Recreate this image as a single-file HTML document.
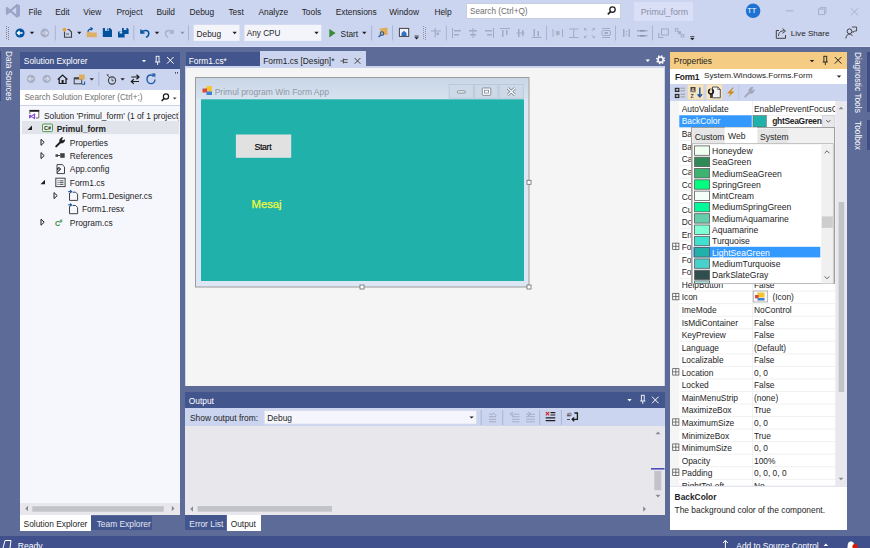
<!DOCTYPE html>
<html><head><meta charset="utf-8">
<style>
*{margin:0;padding:0;box-sizing:border-box}
html,body{width:870px;height:548px;overflow:hidden}
body{position:relative;background:#5D6B99;font-family:"Liberation Sans",sans-serif;font-size:8.4px;color:#1E1E1E}
.a{position:absolute}
.t{position:absolute;white-space:nowrap;line-height:10px;z-index:2}
svg{position:absolute;overflow:visible}
</style></head><body>

<!-- TOP BAR -->
<div class="a" style="left:0;top:0;width:870px;height:47px;background:#CCD5F0"></div>
<div class="a" style="left:0;top:46px;width:870px;height:1px;background:#D9DFF5"></div>

<!-- MENU -->
<svg style="left:0;top:0" width="26" height="22"><g fill="none" stroke="#9AA2C5" stroke-width="2.1" stroke-linejoin="round"><path d="M17.2 5 L6.9 13.6 L6.9 8 L17.2 16.6"/></g><path d="M16.2 3.8 L19.9 5.3 L19.9 16.2 L16.2 17.7 Z" fill="#9AA2C5"/></svg>
<div class="t" style="left:28.4px;top:6.7px">File</div>
<div class="t" style="left:55.2px;top:6.7px">Edit</div>
<div class="t" style="left:83.3px;top:6.7px">View</div>
<div class="t" style="left:116.4px;top:6.7px">Project</div>
<div class="t" style="left:156.4px;top:6.7px">Build</div>
<div class="t" style="left:189.5px;top:6.7px">Debug</div>
<div class="t" style="left:228.4px;top:6.7px">Test</div>
<div class="t" style="left:258.4px;top:6.7px">Analyze</div>
<div class="t" style="left:301.7px;top:6.7px">Tools</div>
<div class="t" style="left:335.7px;top:6.7px">Extensions</div>
<div class="t" style="left:389.2px;top:6.7px">Window</div>
<div class="t" style="left:434.4px;top:6.7px">Help</div>

<!-- TOOLBAR -->
<svg style="left:0;top:0" width="870" height="47"><rect x="6" y="26" width="1" height="1" fill="#7A7F96"/><rect x="8" y="27" width="1" height="1" fill="#7A7F96"/><rect x="6" y="28" width="1" height="1" fill="#7A7F96"/><rect x="8" y="29" width="1" height="1" fill="#7A7F96"/><rect x="6" y="30" width="1" height="1" fill="#7A7F96"/><rect x="8" y="31" width="1" height="1" fill="#7A7F96"/><rect x="6" y="32" width="1" height="1" fill="#7A7F96"/><rect x="8" y="33" width="1" height="1" fill="#7A7F96"/><rect x="6" y="34" width="1" height="1" fill="#7A7F96"/><rect x="8" y="35" width="1" height="1" fill="#7A7F96"/><rect x="6" y="36" width="1" height="1" fill="#7A7F96"/><rect x="8" y="37" width="1" height="1" fill="#7A7F96"/><rect x="6" y="38" width="1" height="1" fill="#7A7F96"/><rect x="8" y="39" width="1" height="1" fill="#7A7F96"/><circle cx="20" cy="33" r="4.6" fill="#00539C"/><path d="M22.6 33 L17.6 33 M19.6 31 L17.4 33 L19.6 35" stroke="#fff" stroke-width="1.3" fill="none"/><path d="M29.8 31.8 L34.2 31.8 L32 34.2 Z" fill="#1E1E1E"/><circle cx="44.8" cy="33" r="4.4" fill="#A9AFC4"/><path d="M42.2 33 L47.2 33 M45.2 31 L47.4 33 L45.2 35" stroke="#D6DBEC" stroke-width="1.2" fill="none"/><rect x="54.8" y="25.5" width="1" height="15" fill="#A9B3D4"/><path d="M64.5 31.5 L64.5 37.3 L71.5 37.3 L71.5 32 L69 29.5 L67.5 29.5" fill="none" stroke="#424242" stroke-width="1.1"/><circle cx="64.5" cy="29.6" r="1.9" fill="#E8A33D"/><path d="M66 34 L69 34" stroke="#424242" stroke-width="0.8"/><path d="M77.1 31.8 L81.5 31.8 L79.3 34.2 Z" fill="#1E1E1E"/><path d="M86.7 31.5 L90 31.5 L91 32.5 L96.8 32.5 L96.8 37.2 L86.7 37.2 Z" fill="#DCB067"/><path d="M88 31.8 C88 29.5 89.5 28.8 92 28.8 M90.6 27.4 L92.3 28.8 L90.6 30.3" fill="none" stroke="#00539C" stroke-width="1.2"/><path d="M102.8 28 L110 28 L112 30 L112 36.9 L102.8 36.9 Z" fill="#00539C"/><rect x="105" y="28" width="4" height="2.8" fill="#CCD5F0"/><rect x="107.2" y="28.4" width="1.2" height="2" fill="#00539C"/><path d="M122 28 L127.5 28 L128.6 29.2 L128.6 34 L122 34 Z" fill="#00539C"/><rect x="123.8" y="28" width="2.6" height="2" fill="#CCD5F0"/><path d="M118 31.5 L123.6 31.5 L124.6 32.5 L124.6 37.6 L118 37.6 Z" fill="#00539C"/><rect x="119.6" y="31.5" width="2.6" height="2" fill="#CCD5F0"/><rect x="133.3" y="25.5" width="1" height="15" fill="#A9B3D4"/><path d="M141 29.5 L141 33 L144.5 33 M141.3 32.6 C143 29.8 148.8 29.5 148.8 33.5 C148.8 35.5 147.5 36.8 146 37.4" fill="none" stroke="#00539C" stroke-width="1.5"/><path d="M154.8 31.8 L159.2 31.8 L157 34.2 Z" fill="#1E1E1E"/><path d="M173 29.5 L173 33 L169.5 33 M172.7 32.6 C171 29.8 165.5 29.5 165.5 33.5 C165.5 35.5 166.8 36.8 168 37.4" fill="none" stroke="#A9AFC4" stroke-width="1.4"/><path d="M180.20000000000002 31.8 L184.6 31.8 L182.4 34.2 Z" fill="#8E94AA"/><rect x="188.0" y="25.5" width="1" height="15" fill="#A9B3D4"/><rect x="193.7" y="24.8" width="45.8" height="16.1" fill="#F4F5FB"/><path d="M232.5 31.8 L236.89999999999998 31.8 L234.7 34.2 Z" fill="#1E1E1E"/><rect x="244.4" y="24.8" width="76.9" height="16.1" fill="#F4F5FB"/><path d="M314.3 31.8 L318.7 31.8 L316.5 34.2 Z" fill="#1E1E1E"/><path d="M329.3 28.9 L335.6 33.1 L329.3 37.4 Z" fill="#388A34"/><path d="M362.1 31.8 L366.5 31.8 L364.3 34.2 Z" fill="#1E1E1E"/><rect x="371.1" y="25.5" width="1" height="15" fill="#A9B3D4"/><path d="M379.5 28.5 L387.5 27.5 L387.5 35 L381 35 Z" fill="#E0AE5A"/><circle cx="382" cy="33.6" r="1.8" fill="none" stroke="#1F5BA6" stroke-width="1.1"/><path d="M380.6 35 L378.6 37" stroke="#1F5BA6" stroke-width="1.3"/><rect x="392.1" y="25.5" width="1" height="15" fill="#A9B3D4"/><rect x="399.4" y="28.4" width="9.3" height="8" fill="#F4F5FB" stroke="#424242" stroke-width="1"/><path d="M401.5 36 L401.5 33 L404 30.8 L406.6 33 L406.6 36 Z" fill="#2D72C4"/><rect x="414.6" y="35.6" width="4" height="0.9" fill="#1E1E1E"/><path d="M414.4 37.3 L418.8 37.3 L416.6 39.6 Z" fill="#1E1E1E"/><rect x="423" y="26" width="1" height="1" fill="#8C92AA"/><rect x="425" y="27" width="1" height="1" fill="#8C92AA"/><rect x="423" y="28" width="1" height="1" fill="#8C92AA"/><rect x="425" y="29" width="1" height="1" fill="#8C92AA"/><rect x="423" y="30" width="1" height="1" fill="#8C92AA"/><rect x="425" y="31" width="1" height="1" fill="#8C92AA"/><rect x="423" y="32" width="1" height="1" fill="#8C92AA"/><rect x="425" y="33" width="1" height="1" fill="#8C92AA"/><rect x="423" y="34" width="1" height="1" fill="#8C92AA"/><rect x="425" y="35" width="1" height="1" fill="#8C92AA"/><rect x="423" y="36" width="1" height="1" fill="#8C92AA"/><rect x="425" y="37" width="1" height="1" fill="#8C92AA"/><rect x="423" y="38" width="1" height="1" fill="#8C92AA"/><rect x="425" y="39" width="1" height="1" fill="#8C92AA"/><path d="M431 31 L440.8 31 M435.2 28 L435.2 37.6" stroke="#A3AAC2" stroke-width="1.1"/><rect x="436.5" y="32.5" width="2.5" height="2.5" fill="#A3AAC2"/><rect x="445.8" y="25.5" width="1" height="15" fill="#A9B3D4"/><path d="M452.5 28 L452.5 38" stroke="#A3AAC2" stroke-width="1"/><rect x="454" y="30" width="7" height="1.5" fill="#A3AAC2"/><rect x="454" y="34" width="5" height="1.5" fill="#A3AAC2"/><path d="M473 28 L473 38" stroke="#A3AAC2" stroke-width="1"/><rect x="469" y="30" width="8" height="1.5" fill="#A3AAC2"/><rect x="470" y="34" width="6" height="1.5" fill="#A3AAC2"/><path d="M493.5 28 L493.5 38" stroke="#A3AAC2" stroke-width="1"/><rect x="485" y="30" width="7" height="1.5" fill="#A3AAC2"/><rect x="487" y="34" width="5" height="1.5" fill="#A3AAC2"/><path d="M500 28.5 L510 28.5" stroke="#A3AAC2" stroke-width="1"/><rect x="502" y="30" width="1.5" height="7" fill="#A3AAC2"/><rect x="506" y="30" width="1.5" height="5" fill="#A3AAC2"/><path d="M516.4 33 L524.5 33" stroke="#A3AAC2" stroke-width="1"/><rect x="518" y="29" width="1.5" height="8" fill="#A3AAC2"/><rect x="522" y="30" width="1.5" height="6" fill="#A3AAC2"/><path d="M531.7 37.5 L541.4 37.5" stroke="#A3AAC2" stroke-width="1"/><rect x="533.5" y="29" width="1.5" height="7.5" fill="#A3AAC2"/><rect x="537.5" y="31" width="1.5" height="5.5" fill="#A3AAC2"/><rect x="546.0" y="25.5" width="1" height="15" fill="#A9B3D4"/><path d="M553 29 L553 37 M562.5 29 L562.5 37 M555.5 33 L560 33 M557.7 30.5 L557.7 35.5 M555.8 31 L559.6 35 M559.6 31 L555.8 35" stroke="#A3AAC2" stroke-width="1"/><path d="M569 29 L578.5 29 M569 37.5 L578.5 37.5 M573.7 29 L573.7 37.5" stroke="#A3AAC2" stroke-width="1.1"/><path d="M584.5 28.5 L587 31 M584.5 28.5 L584.5 30.3 M584.5 28.5 L586.3 28.5 M594.3 28.5 L591.8 31 M594.3 28.5 L594.3 30.3 M594.3 28.5 L592.5 28.5 M584.5 37.6 L587 35.1 M584.5 37.6 L584.5 35.8 M584.5 37.6 L586.3 37.6 M594.3 37.6 L591.8 35.1 M594.3 37.6 L594.3 35.8 M594.3 37.6 L592.5 37.6" stroke="#A3AAC2" stroke-width="0.9" fill="none"/><path d="M602 28.5 L610 28.5 M602 37.5 L610 37.5" stroke="#A3AAC2" stroke-width="1"/><rect x="602" y="30.5" width="8.5" height="5" rx="1.5" fill="none" stroke="#A3AAC2" stroke-width="1"/><rect x="604.5" y="32" width="3.5" height="2" fill="#A3AAC2"/><rect x="615.0" y="25.5" width="1" height="15" fill="#A9B3D4"/><rect x="623" y="29" width="1.5" height="8" fill="#A3AAC2"/><rect x="628.5" y="29" width="1.5" height="8" fill="#A3AAC2"/><rect x="625.8" y="31" width="1.4" height="1.4" fill="#A3AAC2"/><rect x="625.8" y="34" width="1.4" height="1.4" fill="#A3AAC2"/><rect x="637" y="30" width="10.5" height="1.5" fill="#A3AAC2"/><rect x="637" y="35" width="10.5" height="1.5" fill="#A3AAC2"/><rect x="640" y="30" width="4.5" height="1.5" fill="#8990A8"/><rect x="640" y="35" width="4.5" height="1.5" fill="#8990A8"/><rect x="652.0" y="25.5" width="1" height="15" fill="#A9B3D4"/><path d="M658.8 33 L658.8 37.5 L663.5 37.5 M661.5 30 L661.5 35 L668.3 35 L668.3 29 L661.5 29 Z" fill="none" stroke="#A3AAC2" stroke-width="1.1"/><rect x="675.3" y="28.6" width="2.6" height="2.6" fill="none" stroke="#A3AAC2" stroke-width="0.9"/><rect x="678" y="31.2" width="3" height="3" fill="#A3AAC2"/><rect x="681.2" y="34.4" width="2.6" height="2.6" fill="none" stroke="#A3AAC2" stroke-width="0.9"/><rect x="690.3" y="36.3" width="4" height="0.9" fill="#1E1E1E"/><path d="M690.1 38 L694.5 38 L692.3 40.3 Z" fill="#1E1E1E"/></svg>
<div class="t" style="left:196.6px;top:28.9px;font-size:8.3px">Debug</div>
<div class="t" style="left:246.8px;top:28.9px;font-size:8.2px">Any CPU</div>
<div class="t" style="left:340.6px;top:28.9px;font-size:8.3px">Start</div>

<!-- TOP RIGHT -->
<div class="a" style="left:466px;top:3.3px;width:155.4px;height:15.5px;background:#FFFFFF;border:1px solid #C8CEE0"></div>
<div class="t" style="left:470px;top:6.7px;color:#6D6D6D;font-size:8.2px">Search (Ctrl+Q)</div>
<svg style="left:0;top:0" width="870" height="47"><circle cx="612.5" cy="9.6" r="2.7" fill="none" stroke="#1E1E1E" stroke-width="1.3"/><path d="M610.6 11.6 L607.8 14.4" stroke="#1E1E1E" stroke-width="1.6"/><circle cx="753.1" cy="10.8" r="7.3" fill="#1E73D2"/><path d="M786 10.8 L793.5 10.8" stroke="#A9B0C8" stroke-width="1"/><rect x="818.5" y="9" width="6" height="5.6" fill="none" stroke="#A9B0C8" stroke-width="1"/><path d="M820.3 9 L820.3 7.6 L826 7.6 L826 12.8 L824.5 12.8" fill="none" stroke="#A9B0C8" stroke-width="1"/><path d="M851 8.3 L858 15.3 M858 8.3 L851 15.3" stroke="#A9B0C8" stroke-width="1"/><path d="M779 30.5 L776.3 30.5 L776.3 38.3 L785.5 38.3 L785.5 35" fill="none" stroke="#424242" stroke-width="1"/><path d="M778.5 36 C778.5 32 781 30.8 784 30.8 M782.5 28.5 L785.5 31 L782.5 33.4" fill="none" stroke="#424242" stroke-width="1"/><circle cx="849.5" cy="31.3" r="2.4" fill="none" stroke="#424242" stroke-width="1"/><path d="M845.8 38.5 C846.3 35.3 847.5 34.2 849.5 34.2 C851 34.2 852 35 852.6 36" fill="none" stroke="#424242" stroke-width="1"/><path d="M851.8 27 L856.6 27 L856.6 31 L854.5 31 L853 32.5 L853 31" fill="none" stroke="#424242" stroke-width="0.9"/></svg>
<div class="a" style="left:634.3px;top:2.2px;width:58.7px;height:18.5px;background:#D9DFF6"></div>
<div class="t" style="left:640.7px;top:7px;color:#8A8FA6;font-size:8.8px">Primul_form</div>
<div class="t" style="left:747.2px;top:6px;color:#FFFFFF;font-size:7.5px">TT</div>
<div class="t" style="left:790.8px;top:29px;font-size:8.1px">Live Share</div>

<!-- LEFT STRIP (Data Sources) -->
<div class="a" style="left:0;top:51px;width:1.2px;height:50px;background:#3F4F85"></div>

<!-- SOLUTION EXPLORER -->
<div class="a" style="left:20px;top:52px;width:160px;height:17px;background:#42558C"></div>
<div class="a" style="left:20px;top:69px;width:160px;height:21px;background:#CCD5F0"></div>
<div class="a" style="left:20px;top:90px;width:160px;height:16px;background:#FFFFFF"></div>
<div class="a" style="left:20px;top:106px;width:160px;height:397px;background:#F6F7FC"></div>
<div class="a" style="left:20px;top:105px;width:160px;height:1px;background:#CDD3E6"></div>
<div class="a" style="left:20px;top:503px;width:160px;height:12px;background:#E8E8EC"></div>
<div class="a" style="left:20px;top:515px;width:71px;height:16px;background:#FFFFFF"></div>
<div class="a" style="left:91px;top:516px;width:61px;height:14px;background:#42558C"></div>

<!-- SE CONTENT -->
<div class="t" style="left:3px;top:51px;width:49px;height:10px;transform-origin:0 0;transform:translate(9.9px,0) rotate(90deg);color:#FFFFFF;font-size:8.2px">Data Sources</div>
<div class="t" style="left:23.8px;top:56.4px;color:#FFFFFF">Solution Explorer</div>
<svg style="left:0;top:0" width="870" height="548"><path d="M142 60 L146 60 L144 62.3 Z" fill="#FFFFFF"/><path d="M155.8 56.3 L159.4 56.3 M156.2 56.3 L156.2 62 M159 56.3 L159 62 M155 62 L160.2 62 M157.6 62 L157.6 65" stroke="#FFFFFF" stroke-width="0.9" fill="none"/><path d="M167 57 L173.6 63.6 M173.6 57 L167 63.6" stroke="#FFFFFF" stroke-width="1"/><circle cx="31" cy="78.9" r="4.2" fill="#A9AFC4"/><path d="M33.4 78.9 L28.8 78.9 M30.6 77 L28.6 78.9 L30.6 80.8" stroke="#D6DBEC" stroke-width="1.1" fill="none"/><circle cx="46.7" cy="78.9" r="4.2" fill="#A9AFC4"/><path d="M44.3 78.9 L48.9 78.9 M47.1 77 L49.1 78.9 L47.1 80.8" stroke="#D6DBEC" stroke-width="1.1" fill="none"/><path d="M57.8 79.5 L62.6 75 L67.4 79.5 M59.2 78.3 L59.2 83.5 L66 83.5 L66 78.3" fill="none" stroke="#1E1E1E" stroke-width="1.2"/><rect x="61.6" y="80" width="2" height="3.5" fill="#1E1E1E"/><rect x="74.2" y="77.8" width="7.5" height="6" fill="none" stroke="#424242" stroke-width="1"/><rect x="74.2" y="77.8" width="7.5" height="1.6" fill="#424242"/><rect x="79" y="74.5" width="5.7" height="5" fill="#E0AE5A"/><path d="M82 84.2 L84.6 84.2 L84.6 81.6" stroke="#1F5BA6" stroke-width="1.1" fill="none"/><path d="M89.5 78.2 L93.9 78.2 L91.7 80.6 Z" fill="#1E1E1E"/><rect x="98.3" y="72.4" width="1" height="13.5" fill="#A9B3D4"/><circle cx="112" cy="80.5" r="3.6" fill="none" stroke="#424242" stroke-width="1.1"/><path d="M112 78.6 L112 80.7 L113.6 80.7" stroke="#424242" stroke-width="0.9" fill="none"/><path d="M106.4 74.5 L109 74.5 L107.7 76.2 Z" fill="#424242"/><path d="M107.7 75.5 L110 78" stroke="#424242" stroke-width="0.8"/><path d="M120.4 78.2 L124.8 78.2 L122.6 80.6 Z" fill="#1E1E1E"/><path d="M131.3 77 L139 77 M136.5 74.8 L139 77 L136.5 79.2 M139 81.5 L131.3 81.5 M133.8 79.3 L131.3 81.5 L133.8 83.7" fill="none" stroke="#1E1E1E" stroke-width="1.2"/><path d="M153.6 76.5 C152.5 75.3 151.3 75 150.8 75 C148.3 75 147 77 147 79.3 C147 81.8 149 83.6 151 83.6 C153.3 83.6 155 81.8 155 79.5" fill="none" stroke="#1F5BA6" stroke-width="1.4"/><path d="M151.5 73.5 L155.3 73.5 L155.3 77.5 Z" fill="#1F5BA6"/><rect x="175" y="72.3" width="1" height="1.2" fill="#1E1E1E"/><rect x="177" y="72.3" width="1" height="1.2" fill="#1E1E1E"/><circle cx="166" cy="96.5" r="2.6" fill="none" stroke="#1E1E1E" stroke-width="1.2"/><path d="M164.2 98.4 L161.6 101" stroke="#1E1E1E" stroke-width="1.5"/><path d="M172.8 97.4 L176.6 97.4 L174.7 99.4 Z" fill="#424242"/><rect x="22" y="121" width="157" height="13.1" fill="#E2E4EB"/><rect x="30" y="111.5" width="8.8" height="6" fill="#FFFFFF"/><rect x="29.4" y="109.9" width="9.9" height="1.9" fill="#1E1E1E"/><path d="M29.9 111.8 L29.9 114 M38.8 111.8 L38.8 118 L35.8 118" fill="none" stroke="#5A5A5A" stroke-width="0.9"/><path d="M29.6 115 L29.6 117.8 L34.6 114 L34.6 118.6 L29.6 115" fill="none" stroke="#8A4FD8" stroke-width="1.2" stroke-linejoin="round"/><path d="M32 125.5 L32 130 L27.5 130 Z" fill="#1E1E1E"/><path d="M41 139.3 L44.2 142.3 L41 145.3 Z" fill="none" stroke="#1E1E1E" stroke-width="1"/><path d="M41 152.6 L44.2 155.6 L41 158.6 Z" fill="none" stroke="#1E1E1E" stroke-width="1"/><path d="M45 179.8 L45 184.3 L40.5 184.3 Z" fill="#1E1E1E"/><path d="M54 192.6 L57.2 195.6 L54 198.6 Z" fill="none" stroke="#1E1E1E" stroke-width="1"/><path d="M41 219.2 L44.2 222.2 L41 225.2 Z" fill="none" stroke="#1E1E1E" stroke-width="1"/><rect x="42.5" y="124" width="10" height="7.6" rx="1" fill="#E6F2E6" stroke="#4E9A4E" stroke-width="1"/><text x="44" y="130.2" font-family="Liberation Sans" font-size="5.5" font-weight="bold" fill="#1E1E1E">C#</text><path d="M56.2 146.4 L60.6 142" stroke="#1E1E1E" stroke-width="2" stroke-linecap="round"/><path d="M60.3 142.5 C59.2 140.6 59.8 138.2 62.6 137.6 L61.6 139.4 L62.9 140.8 L64.6 139.8 C64.8 142 62.6 143.6 60.8 142.8" fill="#1E1E1E" stroke="#1E1E1E" stroke-width="0.8"/><rect x="55.5" y="154.3" width="2.5" height="2.5" fill="#424242"/><path d="M58 155.5 L60 155.5" stroke="#424242" stroke-width="1"/><rect x="60.2" y="153.2" width="4.5" height="4.6" fill="#424242"/><path d="M57 164.6 L62.2 164.6 L64.5 166.9 L64.5 173.6 L57 173.6 Z" fill="none" stroke="#424242" stroke-width="1"/><path d="M57.8 170 C57 168.5 58 167.2 59.3 167.6 L58.7 168.7 L59.6 169.3 L60.2 168.4 C60.8 169.6 59.8 170.8 58.8 170.4 L57.5 172.6" fill="none" stroke="#1E1E1E" stroke-width="1"/><rect x="55.8" y="178.2" width="9.3" height="8.4" fill="none" stroke="#424242" stroke-width="1"/><path d="M57.5 180.8 L58.5 180.8 M59.5 180.8 L63.5 180.8 M57.5 182.6 L58.5 182.6 M59.5 182.6 L63.5 182.6 M57.5 184.4 L58.5 184.4 M59.5 184.4 L63.5 184.4" stroke="#424242" stroke-width="0.9"/><path d="M69.5 193 L69.5 200.4 L77.6 200.4 L77.6 194.2 L75.6 192.2 L72.6 192.2" fill="none" stroke="#424242" stroke-width="1"/><path d="M68.3 191.6 L71.3 191.6 M70.2 190.2 L71.6 191.6 L70.2 193" fill="none" stroke="#1F5BA6" stroke-width="1.1"/><path d="M69.5 206.3 L69.5 213.70000000000002 L77.6 213.70000000000002 L77.6 207.5 L75.6 205.5 L72.6 205.5" fill="none" stroke="#424242" stroke-width="1"/><path d="M68.3 204.9 L71.3 204.9 M70.2 203.5 L71.6 204.9 L70.2 206.3" fill="none" stroke="#1F5BA6" stroke-width="1.1"/><text x="55" y="225.6" font-family="Liberation Sans" font-size="7" font-weight="bold" fill="#388A34">C</text><text x="59.6" y="223.4" font-family="Liberation Sans" font-size="5" font-weight="bold" fill="#388A34">#</text><path d="M28 505.8 L28 511.2 L25.3 508.5 Z" fill="#868999"/><rect x="32.3" y="506.2" width="131.5" height="5.5" fill="#C2C3C9"/><path d="M171.8 505.8 L171.8 511.2 L174.5 508.5 Z" fill="#868999"/></svg>
<div class="t" style="left:24.4px;top:93px;color:#717171;font-size:8.2px">Search Solution Explorer (Ctrl+;)</div>
<div class="t" style="left:43.9px;top:111.2px;width:135.5px;overflow:hidden">Solution 'Primul_form' (1 of 1 project)</div>
<div class="t" style="left:56.7px;top:123.69999999999999px;font-weight:bold">Primul_form</div>
<div class="t" style="left:69.8px;top:137.79999999999998px;">Properties</div>
<div class="t" style="left:69.8px;top:150.79999999999998px;">References</div>
<div class="t" style="left:69.8px;top:164.29999999999998px;">App.config</div>
<div class="t" style="left:69.8px;top:177.6px;">Form1.cs</div>
<div class="t" style="left:81.9px;top:191.1px;">Form1.Designer.cs</div>
<div class="t" style="left:81.9px;top:204.1px;">Form1.resx</div>
<div class="t" style="left:69.8px;top:217.7px;">Program.cs</div>
<div class="t" style="left:23.6px;top:518.6px">Solution Explorer</div>
<div class="t" style="left:96.7px;top:518.6px;color:#E4E8F4">Team Explorer</div>

<!-- DOCUMENT WELL -->
<div class="a" style="left:186px;top:52px;width:74px;height:14px;background:#42558C"></div>
<div class="a" style="left:260px;top:51px;width:106px;height:15px;background:#CCD5F0"></div>
<div class="a" style="left:185px;top:66px;width:480px;height:320px;background:#CCD5F0"></div>
<div class="a" style="left:186px;top:68px;width:478px;height:318px;background:#F5F5F5"></div>

<!-- DOC CONTENT -->
<div class="t" style="left:188.7px;top:55.8px;color:#FFFFFF">Form1.cs*</div>
<div class="t" style="left:263.2px;top:55.8px;color:#1E1E1E">Form1.cs [Design]*</div>
<svg style="left:0;top:0" width="870" height="548"><path d="M340.6 61 L343.4 61 M343.4 58.6 L343.4 63.4 M343.4 59.6 L347.6 59.6 M343.4 62.4 L347.6 62.4" fill="none" stroke="#424242" stroke-width="0.9"/><path d="M354.6 58 L360.4 63.8 M360.4 58 L354.6 63.8" stroke="#424242" stroke-width="1"/><path d="M645.5 59.6 L650 59.6 L647.75 62 Z" fill="#FFFFFF"/><circle cx="660.6" cy="59.7" r="2.6" fill="none" stroke="#FFFFFF" stroke-width="1.5"/><circle cx="660.6" cy="59.7" r="3.9" fill="none" stroke="#FFFFFF" stroke-width="1.4" stroke-dasharray="1.5 1.56"/><rect x="195" y="77.5" width="334" height="209.5" fill="#DCE6F4"/><defs><linearGradient id="tg" x1="0" y1="0" x2="0" y2="1"><stop offset="0" stop-color="#C9D6E6"/><stop offset="1" stop-color="#D7E2EF"/></linearGradient></defs><rect x="195.5" y="78" width="333" height="21" fill="url(#tg)"/><rect x="195.5" y="77.5" width="333.5" height="209.5" fill="none" stroke="#9C9C9C" stroke-width="1"/><rect x="201" y="99.3" width="323" height="181.7" fill="#20B2AA"/><rect x="206.5" y="86" width="5.5" height="5.5" fill="#F2C531"/><rect x="202.5" y="88.5" width="4.5" height="4" fill="#D9483B"/><rect x="206.5" y="91.5" width="5.5" height="3.5" fill="#3D7FD0"/><rect x="449.2" y="84.4" width="24.100000000000023" height="13.8" fill="#CDD9E7" stroke="#B7C6D9" stroke-width="0.8"/><rect x="474.5" y="84.4" width="23.5" height="13.8" fill="#CDD9E7" stroke="#B7C6D9" stroke-width="0.8"/><rect x="499.2" y="84.4" width="24.099999999999966" height="13.8" fill="#CDD9E7" stroke="#B7C6D9" stroke-width="0.8"/><rect x="457.3" y="90.8" width="8" height="2.2" rx="1" fill="#FFFFFF" stroke="#6C7788" stroke-width="0.8"/><rect x="482.3" y="88" width="8.5" height="7.3" rx="0.8" fill="#FFFFFF" stroke="#6C7788" stroke-width="0.8"/><rect x="484.5" y="90.2" width="4.2" height="2.8" fill="none" stroke="#6C7788" stroke-width="0.7"/><path d="M507.8 88.2 L514.8 95 M514.8 88.2 L507.8 95" stroke="#6C7788" stroke-width="2.6"/><path d="M507.8 88.2 L514.8 95 M514.8 88.2 L507.8 95" stroke="#FFFFFF" stroke-width="1.3"/><rect x="235.9" y="134.5" width="55.3" height="23.3" fill="#E1E1E1"/><rect x="360" y="285" width="4" height="4" fill="#FFFFFF" stroke="#6A6A6A" stroke-width="0.8"/><rect x="527" y="285" width="4" height="4" fill="#FFFFFF" stroke="#6A6A6A" stroke-width="0.8"/><rect x="527" y="180.3" width="4" height="4" fill="#FFFFFF" stroke="#6A6A6A" stroke-width="0.8"/></svg>
<div class="t" style="left:214.7px;top:87px;color:#8E97A6;font-size:8.5px">Primul program Win Form App</div>
<div class="t" style="left:254.6px;top:141.6px;color:#000000;font-size:8.7px;letter-spacing:-0.35px;-webkit-text-stroke:0.15px #000">Start</div>
<div class="t" style="left:251.5px;top:198.1px;color:#F0FA3C;font-size:11.3px;line-height:12px;-webkit-text-stroke:0.25px #F0FA3C">Mesaj</div>

<!-- OUTPUT -->
<div class="a" style="left:185px;top:392px;width:480px;height:16px;background:#42558C"></div>
<div class="a" style="left:185px;top:408px;width:480px;height:18px;background:#CCD5F0"></div>
<div class="a" style="left:185px;top:426px;width:480px;height:89px;background:#E8E8EC"></div>
<div class="a" style="left:185px;top:515px;width:41px;height:15px;background:#42558C"></div>
<div class="a" style="left:227px;top:515px;width:34px;height:16px;background:#FFFFFF"></div>

<!-- OUTPUT CONTENT -->
<div class="t" style="left:188.8px;top:396.3px;color:#FFFFFF">Output</div>
<div class="t" style="left:190px;top:412.5px">Show output from:</div>
<div class="t" style="left:267.3px;top:412.5px">Debug</div>
<div class="t" style="left:189.3px;top:518.6px;color:#E4E8F4">Error List</div>
<div class="t" style="left:230.7px;top:518.6px">Output</div>
<svg style="left:0;top:0" width="870" height="548"><path d="M627.3 399 L631.7 399 L629.5 401.4 Z" fill="#FFFFFF"/><path d="M641 395.3 L644.6 395.3 M641.4 395.3 L641.4 401 M644.2 395.3 L644.2 401 M640.2 401 L645.4 401 M642.8 401 L642.8 404" stroke="#FFFFFF" stroke-width="0.9" fill="none"/><path d="M652 396.7 L658.6 403.3 M658.6 396.7 L652 403.3" stroke="#FFFFFF" stroke-width="1"/><rect x="264.2" y="410.7" width="212.2" height="13.3" fill="#F5F6FC" stroke="#D5D9E8" stroke-width="0.6"/><path d="M469.4 416.4 L473.8 416.4 L471.6 418.6 Z" fill="#1E1E1E"/><rect x="480.7" y="410" width="1" height="15" fill="#A9B3D4"/><rect x="502.2" y="410" width="1" height="15" fill="#A9B3D4"/><rect x="539.2" y="410" width="1" height="15" fill="#A9B3D4"/><rect x="560.9" y="410" width="1" height="15" fill="#A9B3D4"/><path d="M489 414.2 L493 414.2 M489 416.7 L496 416.7 M489 419.3 L496 419.3 M489 421.8 L496 421.8" stroke="#A3AAC2" stroke-width="1"/><path d="M493 412.6 L496.6 416" stroke="#A3AAC2" stroke-width="1"/><path d="M512 414.2 L519.5 414.2 M512 416.7 L519.5 416.7 M512 419.3 L519.5 419.3 M512 421.8 L519.5 421.8" stroke="#A3AAC2" stroke-width="0.9"/><path d="M513 416 L510 414 L513 412" stroke="#A3AAC2" stroke-width="1" fill="none"/><path d="M526 414.2 L535 414.2 M526 416.7 L535 416.7 M526 419.3 L535 419.3 M526 421.8 L535 421.8" stroke="#A3AAC2" stroke-width="0.9"/><path d="M528 412 L531 414 L528 416" stroke="#A3AAC2" stroke-width="1" fill="none"/><path d="M545.8 412 L549.2 415.4 M549.2 412 L545.8 415.4" stroke="#D12D2D" stroke-width="1.1"/><path d="M550.5 412.7 L555.3 412.7 M550.5 415 L555.3 415 M545.7 417.8 L555.3 417.8 M545.7 420.6 L555.3 420.6" stroke="#1E1E1E" stroke-width="1.2"/><path d="M567 415.8 L570.5 415.8 M567 419.5 L570 419.5" stroke="#424242" stroke-width="0.9"/><text x="566.8" y="416" font-family="Liberation Sans" font-size="4.5" fill="#424242">ab</text><path d="M574.4 413 L577.4 413 L577.4 419.3 L572.4 419.3 M574.2 417.4 L572.2 419.3 L574.2 421.2" fill="none" stroke="#1E1E1E" stroke-width="1.3"/><rect x="651" y="426" width="13.5" height="89" fill="#E8E8EC"/><path d="M655.5 434.2 L660.5 434.2 L658 431.5 Z" fill="#868999"/><path d="M655.5 494.8 L660.5 494.8 L658 497.5 Z" fill="#868999"/><rect x="654.3" y="471" width="7" height="19.2" fill="#C2C3C9"/><rect x="651" y="468.2" width="13.5" height="1.3" fill="#2A2AAF"/><path d="M193 506.3 L193 511.7 L190.3 509 Z" fill="#868999"/><rect x="197.6" y="506" width="134.4" height="5.7" fill="#C2C3C9"/><path d="M643.2 506.3 L643.2 511.7 L645.9 509 Z" fill="#868999"/></svg>

<!-- PROPERTIES -->
<div class="a" style="left:670px;top:52px;width:177px;height:17px;background:#F5CC84"></div>
<div class="a" style="left:670px;top:69px;width:177px;height:15px;background:#FFFFFF"></div>
<div class="a" style="left:670px;top:84px;width:177px;height:17px;background:#CCD5F0"></div>
<div class="a" style="left:670px;top:101px;width:177px;height:385px;background:#FFFFFF"></div>
<div class="a" style="left:670px;top:486px;width:177px;height:44px;background:#FFFFFF"></div>

<!-- PROPS CONTENT -->
<div class="t" style="left:673.8px;top:56.4px;color:#1E1E1E">Properties</div>
<div class="t" style="left:675px;top:71.5px;font-weight:bold;font-size:8.4px;letter-spacing:-0.3px">Form1</div>
<div class="t" style="left:704px;top:71.2px;font-size:8.1px">System.Windows.Forms.Form</div>
<div class="t" style="left:674.6px;top:492.3px;font-weight:bold">BackColor</div>
<div class="t" style="left:674.6px;top:504.9px">The background color of the component.</div>
<svg style="left:0;top:0" width="870" height="548"><path d="M809.8 60 L814.2 60 L812 62.3 Z" fill="#1E1E1E"/><path d="M823.5 56.3 L827.1 56.3 M823.9 56.3 L823.9 62 M826.7 56.3 L826.7 62 M822.7 62 L827.9 62 M825.3 62 L825.3 65" stroke="#1E1E1E" stroke-width="0.9" fill="none"/><path d="M834.8 57 L841.4 63.6 M841.4 57 L834.8 63.6" stroke="#1E1E1E" stroke-width="1"/><path d="M836.8 75.4 L841.2 75.4 L839 77.7 Z" fill="#1E1E1E"/><rect x="687.6" y="84.6" width="16" height="15" fill="#F7E5C2" stroke="#EAD6A8" stroke-width="0.6"/><rect x="706.2" y="84.6" width="16" height="15" fill="#F7E5C2" stroke="#EAD6A8" stroke-width="0.6"/><rect x="674.8" y="87.8" width="4.6" height="4.2" fill="#1E1E1E"/><rect x="674.8" y="93.9" width="4.6" height="4.2" fill="#1E1E1E"/><path d="M675.6 89.9 L678.6 89.9 M677.1 88.6 L677.1 91.2 M675.6 96 L678.6 96 M677.1 94.7 L677.1 97.3" stroke="#FFF" stroke-width="0.7"/><path d="M680.5 88.2 L685 88.2 M680.5 90.8 L685 90.8 M680.5 94.3 L685 94.3 M680.5 96.9 L685 96.9" stroke="#9C9C9C" stroke-width="1"/><rect x="690.5" y="87" width="5" height="5.2" fill="#424242"/><text x="691.3" y="91.5" font-family="Liberation Sans" font-size="4.6" font-weight="bold" fill="#F7E5C2">A</text><text x="690.6" y="98" font-family="Liberation Sans" font-size="5.2" font-weight="bold" fill="#424242">Z</text><path d="M699.8 87.5 L699.8 96.5 M697.6 94.2 L699.8 96.8 L702 94.2" fill="none" stroke="#1F5BA6" stroke-width="1.5"/><path d="M712.5 87 L717.8 87 L720.3 89.5 L720.3 97.8 L712.5 97.8 Z" fill="#F4F4F4" stroke="#424242" stroke-width="0.9"/><path d="M717.8 87 L717.8 89.5 L720.3 89.5" fill="none" stroke="#424242" stroke-width="0.7"/><circle cx="711" cy="91.6" r="2.4" fill="none" stroke="#1E1E1E" stroke-width="1.5"/><path d="M711 93.5 L711 98" stroke="#1E1E1E" stroke-width="1.6"/><rect x="710.3" y="88.6" width="1.4" height="2.2" fill="#F7E5C2"/><path d="M732.8 87.6 L727 93.4 L730.6 93.4 L728.2 97.6 L734.5 91.4 L731 91.4 L733.8 87.6 Z" fill="#D08A14"/><rect x="738.3" y="85" width="0.8" height="14" fill="#BCC5E0"/><path d="M745.2 96.6 L750 91.8" stroke="#A3A8B8" stroke-width="2" stroke-linecap="round"/><path d="M749.2 91.6 C748.4 89.2 750.4 87 753 87.6 L751.3 89.4 L752.3 90.8 L754 89.6 C754.4 92 752.2 93.8 750 93.2" fill="#A3A8B8" stroke="#A3A8B8" stroke-width="1"/><rect x="670" y="485.7" width="177" height="1" fill="#D8DCE8"/></svg>
<div class="a" style="left:670px;top:101px;width:177px;height:384.7px;overflow:hidden"><svg style="left:0;top:0" width="177" height="385"><rect x="0" y="0" width="9.2" height="385" fill="#F5F5F5"/><rect x="9.2" y="13.87" width="156" height="1" fill="#F0F0F0"/><rect x="9.2" y="26.42" width="156" height="1" fill="#F0F0F0"/><rect x="9.2" y="38.97" width="156" height="1" fill="#F0F0F0"/><rect x="9.2" y="51.52" width="156" height="1" fill="#F0F0F0"/><rect x="9.2" y="64.08" width="156" height="1" fill="#F0F0F0"/><rect x="9.2" y="76.62" width="156" height="1" fill="#F0F0F0"/><rect x="9.2" y="89.18" width="156" height="1" fill="#F0F0F0"/><rect x="9.2" y="101.72" width="156" height="1" fill="#F0F0F0"/><rect x="9.2" y="114.28" width="156" height="1" fill="#F0F0F0"/><rect x="9.2" y="126.83" width="156" height="1" fill="#F0F0F0"/><rect x="9.2" y="139.38" width="156" height="1" fill="#F0F0F0"/><rect x="9.2" y="151.93" width="156" height="1" fill="#F0F0F0"/><rect x="2.7" y="142.15" width="6.2" height="6.4" fill="#FFFFFF" stroke="#555" stroke-width="0.8"/><path d="M5.8 142.15 L5.8 148.55 M2.7 145.35 L8.9 145.35" stroke="#555" stroke-width="0.8"/><rect x="9.2" y="164.48" width="156" height="1" fill="#F0F0F0"/><rect x="9.2" y="177.03" width="156" height="1" fill="#F0F0F0"/><rect x="9.2" y="189.58" width="156" height="1" fill="#F0F0F0"/><rect x="9.2" y="202.13" width="156" height="1" fill="#F0F0F0"/><rect x="2.7" y="192.35" width="6.2" height="6.4" fill="#FFFFFF" stroke="#555" stroke-width="0.8"/><path d="M5.8 192.35 L5.8 198.75 M2.7 195.55 L8.9 195.55" stroke="#555" stroke-width="0.8"/><rect x="9.2" y="214.67" width="156" height="1" fill="#F0F0F0"/><rect x="9.2" y="227.23" width="156" height="1" fill="#F0F0F0"/><rect x="9.2" y="239.78" width="156" height="1" fill="#F0F0F0"/><rect x="9.2" y="252.33" width="156" height="1" fill="#F0F0F0"/><rect x="9.2" y="264.88" width="156" height="1" fill="#F0F0F0"/><rect x="9.2" y="277.42" width="156" height="1" fill="#F0F0F0"/><rect x="2.7" y="267.65" width="6.2" height="6.4" fill="#FFFFFF" stroke="#555" stroke-width="0.8"/><path d="M5.8 267.65 L5.8 274.05 M2.7 270.85 L8.9 270.85" stroke="#555" stroke-width="0.8"/><rect x="9.2" y="289.98" width="156" height="1" fill="#F0F0F0"/><rect x="9.2" y="302.52" width="156" height="1" fill="#F0F0F0"/><rect x="9.2" y="315.08" width="156" height="1" fill="#F0F0F0"/><rect x="9.2" y="327.62" width="156" height="1" fill="#F0F0F0"/><rect x="2.7" y="317.85" width="6.2" height="6.4" fill="#FFFFFF" stroke="#555" stroke-width="0.8"/><path d="M5.8 317.85 L5.8 324.25 M2.7 321.05 L8.9 321.05" stroke="#555" stroke-width="0.8"/><rect x="9.2" y="340.17" width="156" height="1" fill="#F0F0F0"/><rect x="9.2" y="352.73" width="156" height="1" fill="#F0F0F0"/><rect x="2.7" y="342.95" width="6.2" height="6.4" fill="#FFFFFF" stroke="#555" stroke-width="0.8"/><path d="M5.8 342.95 L5.8 349.35 M2.7 346.15 L8.9 346.15" stroke="#555" stroke-width="0.8"/><rect x="9.2" y="365.27" width="156" height="1" fill="#F0F0F0"/><rect x="9.2" y="377.83" width="156" height="1" fill="#F0F0F0"/><rect x="2.7" y="368.05" width="6.2" height="6.4" fill="#FFFFFF" stroke="#555" stroke-width="0.8"/><path d="M5.8 368.05 L5.8 374.45 M2.7 371.25 L8.9 371.25" stroke="#555" stroke-width="0.8"/><rect x="9.2" y="390.38" width="156" height="1" fill="#F0F0F0"/><rect x="82" y="0" width="1" height="385" fill="#F0F0F0"/><rect x="9.3" y="14.3" width="72.5" height="12" fill="#3399FF"/><rect x="83" y="14.6" width="13.3" height="11.4" fill="#20B2AA" stroke="#555" stroke-width="0.5"/><rect x="152.2" y="14.3" width="12.1" height="12" fill="#E8E8EC" stroke="#C8C8D0" stroke-width="0.7"/><path d="M156.3 19.2 L158.3 21.2 L160.3 19.2" fill="none" stroke="#424242" stroke-width="0.9"/><rect x="83.2" y="190" width="14.5" height="11" fill="#F8F8F8" stroke="#9A9A9A" stroke-width="0.7"/><rect x="87.5" y="191.5" width="7" height="5" fill="#F2C531"/><rect x="85" y="194" width="3.5" height="3.3" fill="#D9483B"/><rect x="87.5" y="197" width="7" height="2.5" fill="#3D7FD0"/><rect x="165.3" y="0" width="11.7" height="385" fill="#E9E9ED"/><path d="M168.6 8.3 L173.4 8.3 L171 5.8 Z" fill="#868999"/><path d="M168.6 376.8 L173.4 376.8 L171 379.3 Z" fill="#868999"/><rect x="168.6" y="101" width="5.6" height="190" fill="#C2C3C9"/></svg>
<div class="t" style="left:11.7px;top:3.20px;width:70px;overflow:hidden">AutoValidate</div>
<div class="t" style="left:84px;top:3.20px;width:81px;overflow:hidden">EnablePreventFocusChange</div>
<div class="t" style="left:11.7px;top:28.30px;width:70px;overflow:hidden">BackgroundImage</div>
<div class="t" style="left:84px;top:28.30px;width:81px;overflow:hidden">(none)</div>
<div class="t" style="left:11.7px;top:40.85px;width:70px;overflow:hidden">BackgroundImageLayout</div>
<div class="t" style="left:84px;top:40.85px;width:81px;overflow:hidden">Tile</div>
<div class="t" style="left:11.7px;top:53.40px;width:70px;overflow:hidden">CancelButton</div>
<div class="t" style="left:84px;top:53.40px;width:81px;overflow:hidden">(none)</div>
<div class="t" style="left:11.7px;top:65.95px;width:70px;overflow:hidden">CausesValidation</div>
<div class="t" style="left:84px;top:65.95px;width:81px;overflow:hidden">True</div>
<div class="t" style="left:11.7px;top:78.50px;width:70px;overflow:hidden">ContextMenuStrip</div>
<div class="t" style="left:84px;top:78.50px;width:81px;overflow:hidden">(none)</div>
<div class="t" style="left:11.7px;top:91.05px;width:70px;overflow:hidden">ControlBox</div>
<div class="t" style="left:84px;top:91.05px;width:81px;overflow:hidden">True</div>
<div class="t" style="left:11.7px;top:103.60px;width:70px;overflow:hidden">Cursor</div>
<div class="t" style="left:84px;top:103.60px;width:81px;overflow:hidden">Default</div>
<div class="t" style="left:11.7px;top:116.15px;width:70px;overflow:hidden">DoubleBuffered</div>
<div class="t" style="left:84px;top:116.15px;width:81px;overflow:hidden">False</div>
<div class="t" style="left:11.7px;top:128.70px;width:70px;overflow:hidden">Enabled</div>
<div class="t" style="left:84px;top:128.70px;width:81px;overflow:hidden">True</div>
<div class="t" style="left:11.7px;top:141.25px;width:70px;overflow:hidden">Font</div>
<div class="t" style="left:84px;top:141.25px;width:81px;overflow:hidden">Microsoft Sans Serif, 8.25pt</div>
<div class="t" style="left:11.7px;top:153.80px;width:70px;overflow:hidden">ForeColor</div>
<div class="t" style="left:84px;top:153.80px;width:81px;overflow:hidden">ControlText</div>
<div class="t" style="left:11.7px;top:166.35px;width:70px;overflow:hidden">FormBorderStyle</div>
<div class="t" style="left:84px;top:166.35px;width:81px;overflow:hidden">Sizable</div>
<div class="t" style="left:11.7px;top:178.90px;width:70px;overflow:hidden">HelpButton</div>
<div class="t" style="left:84px;top:178.90px;width:81px;overflow:hidden">False</div>
<div class="t" style="left:11.7px;top:191.45px;width:70px;overflow:hidden">Icon</div>
<div class="t" style="left:102.5px;top:191.45px">(Icon)</div>
<div class="t" style="left:11.7px;top:204.00px;width:70px;overflow:hidden">ImeMode</div>
<div class="t" style="left:84px;top:204.00px;width:81px;overflow:hidden">NoControl</div>
<div class="t" style="left:11.7px;top:216.55px;width:70px;overflow:hidden">IsMdiContainer</div>
<div class="t" style="left:84px;top:216.55px;width:81px;overflow:hidden">False</div>
<div class="t" style="left:11.7px;top:229.10px;width:70px;overflow:hidden">KeyPreview</div>
<div class="t" style="left:84px;top:229.10px;width:81px;overflow:hidden">False</div>
<div class="t" style="left:11.7px;top:241.65px;width:70px;overflow:hidden">Language</div>
<div class="t" style="left:84px;top:241.65px;width:81px;overflow:hidden">(Default)</div>
<div class="t" style="left:11.7px;top:254.20px;width:70px;overflow:hidden">Localizable</div>
<div class="t" style="left:84px;top:254.20px;width:81px;overflow:hidden">False</div>
<div class="t" style="left:11.7px;top:266.75px;width:70px;overflow:hidden">Location</div>
<div class="t" style="left:84px;top:266.75px;width:81px;overflow:hidden">0, 0</div>
<div class="t" style="left:11.7px;top:279.30px;width:70px;overflow:hidden">Locked</div>
<div class="t" style="left:84px;top:279.30px;width:81px;overflow:hidden">False</div>
<div class="t" style="left:11.7px;top:291.85px;width:70px;overflow:hidden">MainMenuStrip</div>
<div class="t" style="left:84px;top:291.85px;width:81px;overflow:hidden">(none)</div>
<div class="t" style="left:11.7px;top:304.40px;width:70px;overflow:hidden">MaximizeBox</div>
<div class="t" style="left:84px;top:304.40px;width:81px;overflow:hidden">True</div>
<div class="t" style="left:11.7px;top:316.95px;width:70px;overflow:hidden">MaximumSize</div>
<div class="t" style="left:84px;top:316.95px;width:81px;overflow:hidden">0, 0</div>
<div class="t" style="left:11.7px;top:329.50px;width:70px;overflow:hidden">MinimizeBox</div>
<div class="t" style="left:84px;top:329.50px;width:81px;overflow:hidden">True</div>
<div class="t" style="left:11.7px;top:342.05px;width:70px;overflow:hidden">MinimumSize</div>
<div class="t" style="left:84px;top:342.05px;width:81px;overflow:hidden">0, 0</div>
<div class="t" style="left:11.7px;top:354.60px;width:70px;overflow:hidden">Opacity</div>
<div class="t" style="left:84px;top:354.60px;width:81px;overflow:hidden">100%</div>
<div class="t" style="left:11.7px;top:367.15px;width:70px;overflow:hidden">Padding</div>
<div class="t" style="left:84px;top:367.15px;width:81px;overflow:hidden">0, 0, 0, 0</div>
<div class="t" style="left:11.7px;top:379.70px;width:70px;overflow:hidden">RightToLeft</div>
<div class="t" style="left:84px;top:379.70px;width:81px;overflow:hidden">No</div>
<div class="t" style="left:102.2px;top:15.3px;font-weight:bold;font-size:8.5px;letter-spacing:-0.32px;width:50px;overflow:hidden">ghtSeaGreen</div>
<div class="t" style="left:11.7px;top:15.3px;color:#FFFFFF">BackColor</div></div>
<!-- DROPDOWN -->
<div class="a" style="left:690.7px;top:126.6px;width:144.0px;height:157.6px;overflow:hidden;z-index:5"><svg style="left:0;top:0" width="144.0" height="157.6"><rect x="0.5" y="0.5" width="143.0" height="156.6" fill="#F0F0F0" stroke="#A0A0A0" stroke-width="1"/><rect x="1.7999999999999545" y="1.4000000000000057" width="31.799999999999955" height="15" fill="#E6E6E6"/><rect x="66.79999999999995" y="1.9000000000000057" width="30.299999999999955" height="14.5" fill="#E6E6E6"/><rect x="33.799999999999955" y="0.4000000000000057" width="32.299999999999955" height="16.5" fill="#FFFFFF"/><rect x="1.5" y="16.700000000000017" width="140.5999999999999" height="139.89999999999998" fill="#FFFFFF" stroke="#B0B0B0" stroke-width="0.8"/><rect x="3.599999999999909" y="18.90" width="15" height="9.4" fill="#F0FFF0" stroke="#5A5A5A" stroke-width="0.8"/><rect x="3.599999999999909" y="30.20" width="15" height="9.4" fill="#2E8B57" stroke="#5A5A5A" stroke-width="0.8"/><rect x="3.599999999999909" y="41.50" width="15" height="9.4" fill="#3CB371" stroke="#5A5A5A" stroke-width="0.8"/><rect x="3.599999999999909" y="52.80" width="15" height="9.4" fill="#00FF7F" stroke="#5A5A5A" stroke-width="0.8"/><rect x="3.599999999999909" y="64.10" width="15" height="9.4" fill="#F5FFFA" stroke="#5A5A5A" stroke-width="0.8"/><rect x="3.599999999999909" y="75.40" width="15" height="9.4" fill="#00FA9A" stroke="#5A5A5A" stroke-width="0.8"/><rect x="3.599999999999909" y="86.70" width="15" height="9.4" fill="#66CDAA" stroke="#5A5A5A" stroke-width="0.8"/><rect x="3.599999999999909" y="98.00" width="15" height="9.4" fill="#7FFFD4" stroke="#5A5A5A" stroke-width="0.8"/><rect x="3.599999999999909" y="109.30" width="15" height="9.4" fill="#40E0D0" stroke="#5A5A5A" stroke-width="0.8"/><rect x="2.2999999999999545" y="119.80" width="127" height="10.6" fill="#3399FF"/><rect x="3.599999999999909" y="120.60" width="15" height="9.4" fill="#20B2AA" stroke="#5A5A5A" stroke-width="0.8"/><rect x="3.599999999999909" y="131.90" width="15" height="9.4" fill="#48D1CC" stroke="#5A5A5A" stroke-width="0.8"/><rect x="3.599999999999909" y="143.20" width="15" height="9.4" fill="#2F4F4F" stroke="#5A5A5A" stroke-width="0.8"/><rect x="3.599999999999909" y="153.90" width="15" height="2.4" fill="#AFEEEE" stroke="#5A5A5A" stroke-width="0.8"/><rect x="130.29999999999995" y="17.400000000000006" width="11.299999999999955" height="139" fill="#F0F0F0"/><path d="M133.5999999999999 26.200000000000017 L136.0 23.80000000000001 L138.39999999999998 26.200000000000017" fill="none" stroke="#606060" stroke-width="1"/><path d="M133.5999999999999 149.4 L136.0 151.79999999999998 L138.39999999999998 149.4" fill="none" stroke="#606060" stroke-width="1"/><rect x="130.79999999999995" y="89.4" width="11" height="11.400000000000006" fill="#CDCDCD"/></svg>
<div class="t" style="left:21.30px;top:19.40px;color:#1E1E1E;font-size:8.6px">Honeydew</div>
<div class="t" style="left:21.30px;top:30.70px;color:#1E1E1E;font-size:8.6px">SeaGreen</div>
<div class="t" style="left:21.30px;top:42.00px;color:#1E1E1E;font-size:8.6px">MediumSeaGreen</div>
<div class="t" style="left:21.30px;top:53.30px;color:#1E1E1E;font-size:8.6px">SpringGreen</div>
<div class="t" style="left:21.30px;top:64.60px;color:#1E1E1E;font-size:8.6px">MintCream</div>
<div class="t" style="left:21.30px;top:75.90px;color:#1E1E1E;font-size:8.6px">MediumSpringGreen</div>
<div class="t" style="left:21.30px;top:87.20px;color:#1E1E1E;font-size:8.6px">MediumAquamarine</div>
<div class="t" style="left:21.30px;top:98.50px;color:#1E1E1E;font-size:8.6px">Aquamarine</div>
<div class="t" style="left:21.30px;top:109.80px;color:#1E1E1E;font-size:8.6px">Turquoise</div>
<div class="t" style="left:21.30px;top:121.10px;color:#FFFFFF;font-size:8.6px">LightSeaGreen</div>
<div class="t" style="left:21.30px;top:132.40px;color:#1E1E1E;font-size:8.6px">MediumTurquoise</div>
<div class="t" style="left:21.30px;top:143.70px;color:#1E1E1E;font-size:8.6px">DarkSlateGray</div>
<div class="t" style="left:4.10px;top:5.30px;font-size:8.6px">Custom</div>
<div class="t" style="left:37.40px;top:4.40px;font-size:8.6px">Web</div>
<div class="t" style="left:69.30px;top:5.30px;font-size:8.6px">System</div></div>
<!-- /DROPDOWN -->

<!-- STATUS BAR -->
<div class="a" style="left:0;top:536px;width:870px;height:12px;background:#40508D"></div>

<!-- RIGHT STRIP + STATUS -->
<div class="a" style="left:866.6px;top:51.6px;width:3.4px;height:60.4px;background:#3F4F85"></div>
<div class="a" style="left:866.6px;top:120.3px;width:3.4px;height:29.4px;background:#3F4F85"></div>
<div class="t" style="left:862.5px;top:52.4px;transform-origin:0 0;transform:rotate(90deg);color:#FFFFFF">Diagnostic Tools</div>
<div class="t" style="left:862.5px;top:120.5px;transform-origin:0 0;transform:rotate(90deg);color:#FFFFFF">Toolbox</div>
<div class="t" style="left:17.8px;top:540.5px;color:#FFFFFF;font-size:8.6px">Ready</div>
<div class="t" style="left:736.3px;top:540.5px;color:#FFFFFF;font-size:8.4px">Add to Source Control</div>
<svg style="left:0;top:0" width="870" height="548"><path d="M3 548 L5 540.5 L11 540.5 L10 548" fill="none" stroke="#FFFFFF" stroke-width="1"/><path d="M725.4 548 L725.4 540.5 M723 543 L725.4 540.5 L727.8 543" fill="none" stroke="#FFFFFF" stroke-width="1"/><path d="M823.6 546 L828.2 546 L825.9 543.6 Z" fill="#FFFFFF"/><path d="M847.5 548 C847.5 543.5 848.5 541.5 851 541.5 C853.5 541.5 854.5 543.5 854.5 548" fill="#FFFFFF"/><circle cx="855" cy="546.5" r="2.6" fill="#E51400"/></svg>
</body></html>
